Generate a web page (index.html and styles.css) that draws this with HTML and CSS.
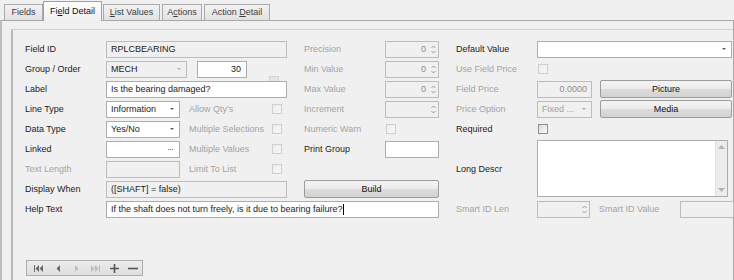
FILE: index.html
```html
<!DOCTYPE html>
<html lang="en">
<head>
    <meta charset="UTF-8">
    <title>Field Detail</title>
    <link rel="stylesheet" href="styles.css">
</head>
<body>
<div class="tabs">
    <div class="tab tab-fields">Fields</div>
    <div class="tab tab-active tab-detail">Fi<u>e</u>ld Detail</div>
    <div class="tab tab-list"><u>L</u>ist Values</div>
    <div class="tab tab-actions">A<u>c</u>tions</div>
    <div class="tab tab-adetail">Action <u>D</u>etail</div>
</div>
<div class="panel">
    <div class="group">
        <div class="form">
            <!-- row 1 -->
            <div class="lbl r1">Field ID</div>
            <div class="box ro wide r1">RPLCBEARING</div>
            <div class="lbl off c7 r1">Precision</div>
            <div class="box ro spin c8 r1"><span class="num">0</span><span class="arrows"><svg width="5" height="9" viewBox="0 0 5 9"><path d="M0.5 3 L2.5 1 L4.5 3 M0.5 6 L2.5 8 L4.5 6" fill="none" stroke="#9a9a9a"/></svg></span></div>
            <div class="lbl c10 r1">Default Value</div>
            <div class="box combo c11-14 r1"><span></span><i class="drop"></i></div>

            <!-- row 2 -->
            <div class="lbl r2">Group / Order</div>
            <div class="pair r2">
                <div class="box ro combo mech">MECH<i class="drop light"></i></div>
                <div class="box order">30</div>
            </div>
            <div class="dash r2"></div>
            <div class="lbl off c7 r2">Min Value</div>
            <div class="box ro spin c8 r2"><span class="num">0</span><span class="arrows"><svg width="5" height="9" viewBox="0 0 5 9"><path d="M0.5 3 L2.5 1 L4.5 3 M0.5 6 L2.5 8 L4.5 6" fill="none" stroke="#9a9a9a"/></svg></span></div>
            <div class="lbl off c10 r2">Use Field Price</div>
            <div class="chk off c11 r2"></div>

            <!-- row 3 -->
            <div class="lbl r3">Label</div>
            <div class="box wide r3">Is the bearing damaged?</div>
            <div class="lbl off c7 r3">Max Value</div>
            <div class="box ro spin c8 r3"><span class="num">0</span><span class="arrows"><svg width="5" height="9" viewBox="0 0 5 9"><path d="M0.5 3 L2.5 1 L4.5 3 M0.5 6 L2.5 8 L4.5 6" fill="none" stroke="#9a9a9a"/></svg></span></div>
            <div class="lbl off c10 r3">Field Price</div>
            <div class="box ro num-box c11 r3">0.0000</div>
            <div class="btn c13 r3">Picture</div>

            <!-- row 4 -->
            <div class="lbl r4">Line Type</div>
            <div class="box combo c2 r4">Information<i class="drop"></i></div>
            <div class="lbl off c4 r4">Allow Qty's</div>
            <div class="chk off c5 r4"></div>
            <div class="lbl off c7 r4">Increment</div>
            <div class="box ro spin c8 r4"><span class="num"></span><span class="arrows"><svg width="5" height="9" viewBox="0 0 5 9"><path d="M0.5 3 L2.5 1 L4.5 3 M0.5 6 L2.5 8 L4.5 6" fill="none" stroke="#9a9a9a"/></svg></span></div>
            <div class="lbl off c10 r4">Price Option</div>
            <div class="box ro combo dim c11 r4">Fixed ...<i class="drop light"></i></div>
            <div class="btn c13 r4">Media</div>

            <!-- row 5 -->
            <div class="lbl r5">Data Type</div>
            <div class="box combo c2 r5">Yes/No<i class="drop"></i></div>
            <div class="lbl off c4 r5">Multiple Selections</div>
            <div class="chk off c5 r5"></div>
            <div class="lbl off c7 r5">Numeric Warn</div>
            <div class="chk off c8 r5"></div>
            <div class="lbl c10 r5">Required</div>
            <div class="chk c11 r5"></div>

            <!-- row 6 -->
            <div class="lbl r6">Linked</div>
            <div class="box combo c2 r6"><span></span><span class="dots">&middot;&middot;&middot;</span></div>
            <div class="lbl off c4 r6">Multiple Values</div>
            <div class="chk off c5 r6"></div>
            <div class="lbl c7 r6">Print Group</div>
            <div class="box c8 r6"></div>
            <div class="lbl c10 r6-9">Long Descr</div>
            <div class="memo c11-14 r6-9">
                <div class="memo-text"></div>
                <div class="vscroll">
                    <svg width="7" height="4" viewBox="0 0 7 4"><path d="M0 4 L3.5 0 L7 4 Z" fill="#b4b4b4"/></svg>
                    <svg width="7" height="4" viewBox="0 0 7 4"><path d="M0 0 L3.5 4 L7 0 Z" fill="#b4b4b4"/></svg>
                </div>
            </div>

            <!-- row 7 -->
            <div class="lbl off r7">Text Length</div>
            <div class="box ro c2 r7"></div>
            <div class="lbl off c4 r7">Limit To List</div>
            <div class="chk off c5 r7"></div>

            <!-- row 8 -->
            <div class="lbl r8">Display When</div>
            <div class="box ro wide r8">([SHAFT] = false)</div>
            <div class="btn build r8">Build</div>

            <!-- row 9 -->
            <div class="lbl r9">Help Text</div>
            <div class="box help r9">If the shaft does not turn freely, is it due to bearing failure?<span class="caret"></span></div>
            <div class="lbl off c10 r9">Smart ID Len</div>
            <div class="box ro spin smart c11 r9"><span class="num"></span><span class="arrows"><svg width="5" height="9" viewBox="0 0 5 9"><path d="M0.5 3 L2.5 1 L4.5 3 M0.5 6 L2.5 8 L4.5 6" fill="none" stroke="#9a9a9a"/></svg></span></div>
            <div class="smart-value c13 r9">
                <span class="lbl off">Smart ID Value</span>
                <div class="box ro smart-box"></div>
            </div>
        </div>

        <div class="navigator">
            <span class="nav-btn"><svg width="10" height="7" viewBox="0 0 10 7"><path d="M0.5 0 V7" stroke="#6a6a6a"/><path d="M5 0 L1.5 3.5 L5 7 Z M9 0 L5.5 3.5 L9 7 Z" fill="#6a6a6a"/></svg></span>
            <span class="nav-btn"><svg width="4" height="7" viewBox="0 0 4 7"><path d="M4 0 L0.5 3.5 L4 7 Z" fill="#6a6a6a"/></svg></span>
            <span class="nav-btn"><svg width="4" height="7" viewBox="0 0 4 7"><path d="M0 0 L3.5 3.5 L0 7 Z" fill="#bdbdbd"/></svg></span>
            <span class="nav-btn"><svg width="10" height="7" viewBox="0 0 10 7"><path d="M1 0 L4.5 3.5 L1 7 Z M5 0 L8.5 3.5 L5 7 Z" fill="#bdbdbd"/><path d="M9.5 0 V7" stroke="#bdbdbd"/></svg></span>
            <span class="nav-btn"><svg width="9" height="9" viewBox="0 0 9 9"><path d="M4.5 0 V9 M0 4.5 H9" stroke="#555" stroke-width="1.6"/></svg></span>
            <span class="nav-btn"><svg width="10" height="9" viewBox="0 0 10 9"><path d="M0 4.5 H10" stroke="#555" stroke-width="1.6"/></svg></span>
        </div>
    </div>
</div>
</body>
</html>
```

FILE: styles.css
```css
body {
    margin: 0;
    height: 280px;
    background-color: #f0f0f0;
    font-family: "Liberation Sans", Arial, sans-serif;
    font-size: 9px;
    color: #1b1b1b;
    overflow: hidden;
}

/* tab strip */
.tabs {
    display: flex;
    align-items: flex-end;
    height: 20px;
    padding-left: 4px;
}
.tab {
    box-sizing: border-box;
    height: 16px;
    line-height: 14px;
    text-align: center;
    border: 1px solid #a9a9a9;
    border-bottom: none;
    background: linear-gradient(#f3f3f3, #e1e1e1);
    color: #3c3c3c;
}
.tab u {
    text-decoration: underline;
}
.tab-fields { width: 39px; }
.tab-detail { width: 59px; }
.tab-list { width: 57px; margin-left: 1px; }
.tab-actions { width: 40px; margin-left: 2px; }
.tab-adetail { width: 66px; margin-left: 2px; }
.tab-active {
    position: relative;
    height: 20px;
    line-height: 18px;
    margin-bottom: -1px;
    background: linear-gradient(#fdfdfd, #f0f0f0);
    color: #111;
    border-color: #a0a0a0;
}

.panel {
    border-top: 1px solid #a9a9a9;
    border-left: 2px solid #bdbdbd;
    border-right: 1px solid #a9a9a9;
    height: 260px;
    box-sizing: border-box;
    padding: 8px 0 0 9px;
}
.group {
    border-top: 1px solid #d3d3d3;
    border-left: 2px solid #b9b9b9;
    height: 251px;
    box-sizing: border-box;
    padding: 9px 0 0 12px;
}

/* form grid */
.form {
    display: grid;
    grid-template-columns: 81px 74px 9px 83px 15px 17px 81px 54px 17px 81px 55px 8px 132px;
    grid-auto-rows: 20px;
    align-items: center;
}
.lbl {
    grid-column: 1;
    white-space: nowrap;
    color: #1b1b1b;
}
.lbl.off {
    color: #a3a3a3;
}

.r1 { grid-row: 1; }
.r2 { grid-row: 2; }
.r3 { grid-row: 3; }
.r4 { grid-row: 4; }
.r5 { grid-row: 5; }
.r6 { grid-row: 6; }
.r7 { grid-row: 7; }
.r8 { grid-row: 8; }
.r9 { grid-row: 9; }
.r6-9 { grid-row: 6 / 9; }

.c2 { grid-column: 2; }
.c4 { grid-column: 4; }
.c5 { grid-column: 5; }
.c7 { grid-column: 7; }
.c8 { grid-column: 8; }
.c10 { grid-column: 10; }
.c11 { grid-column: 11; }
.c13 { grid-column: 13; }
.c11-14 { grid-column: 11 / 14; }
.wide { grid-column: 2 / 6; }
.help { grid-column: 2 / 9; }
.build { grid-column: 7 / 9; }
.pair { grid-column: 2 / 5; }

/* inputs */
.box {
    box-sizing: border-box;
    height: 17px;
    border: 1px solid #abadb3;
    background: #fff;
    padding: 0 4px;
    line-height: 15px;
    white-space: nowrap;
    overflow: hidden;
    display: flex;
    align-items: center;
}
.box.ro {
    background: #f0f0f0;
    border-color: #bcbcbc;
}
.combo {
    justify-content: space-between;
    padding-right: 3px;
}
.combo.dim {
    color: #a0a0a0;
}
.drop {
    width: 0;
    height: 0;
    border-left: 2px solid transparent;
    border-right: 2px solid transparent;
    border-top: 2px solid #5a5a5a;
    margin-right: 2px;
}
.drop.light {
    border-top-color: #b0b0b0;
}
.dots {
    color: #555;
    letter-spacing: -1px;
    margin-right: 3px;
}

.pair {
    display: flex;
    align-items: center;
    gap: 10px;
}
.mech {
    width: 81px;
}
.order {
    width: 50px;
    justify-content: flex-end;
    padding-right: 5px;
}
.dash {
    grid-column: 5;
    align-self: end;
    width: 8px;
    height: 4px;
    margin: 0 0 -3px -3px;
    background: #e4e4e4;
    border: 1px solid #d4d4d4;
}

.spin {
    padding: 0 2px 0 4px;
    color: #8c8c8c;
}
.spin .num {
    flex: 1;
    text-align: right;
    padding-right: 5px;
}
.arrows {
    display: flex;
    align-items: center;
}
.num-box {
    justify-content: flex-end;
    color: #8c8c8c;
}
.smart {
    width: 53px;
}

.chk {
    box-sizing: border-box;
    width: 10px;
    height: 10px;
    border: 1px solid #8e8f8f;
    background: linear-gradient(135deg, #dcdcdc, #fbfbfb);
}
.chk.off {
    border-color: #cfcfcf;
    background: linear-gradient(135deg, #ececec, #f8f8f8);
}
.c11.chk, .c8.chk {
    margin-left: 1px;
}

.caret {
    display: inline-block;
    width: 1px;
    height: 11px;
    background: #000;
    margin-left: 1px;
}

/* buttons */
.btn {
    box-sizing: border-box;
    height: 18px;
    border: 1px solid #9c9c9c;
    border-radius: 2px;
    background: linear-gradient(#f4f4f4 0%, #ebebeb 48%, #dcdcdc 52%, #d2d2d2 100%);
    text-align: center;
    line-height: 16px;
    color: #111;
}

/* long description */
.memo {
    align-self: start;
    margin-top: 1px;
    box-sizing: border-box;
    width: 191px;
    height: 57px;
    border: 1px solid #abadb3;
    background: #fff;
    display: flex;
}
.memo-text {
    flex: 1;
}
.vscroll {
    width: 11px;
    background: #ececec;
    border-left: 1px solid #e2e2e2;
    display: flex;
    flex-direction: column;
    justify-content: space-between;
    align-items: center;
    padding: 4px 0;
}

.smart-value {
    display: flex;
    align-items: center;
    justify-content: space-between;
    margin-left: -1px;
    margin-right: -2px;
}
.smart-value .lbl {
    grid-column: auto;
}
.smart-box {
    width: 54px;
}

/* record navigator */
.navigator {
    display: flex;
    align-items: center;
    box-sizing: border-box;
    width: 117px;
    height: 16px;
    margin: 41px 0 0 1px;
    padding-left: 3px;
    border: 1px solid #acacac;
    background: linear-gradient(#ececec, #dedede);
}
.nav-btn {
    width: 19px;
    display: flex;
    justify-content: center;
    align-items: center;
}
```
